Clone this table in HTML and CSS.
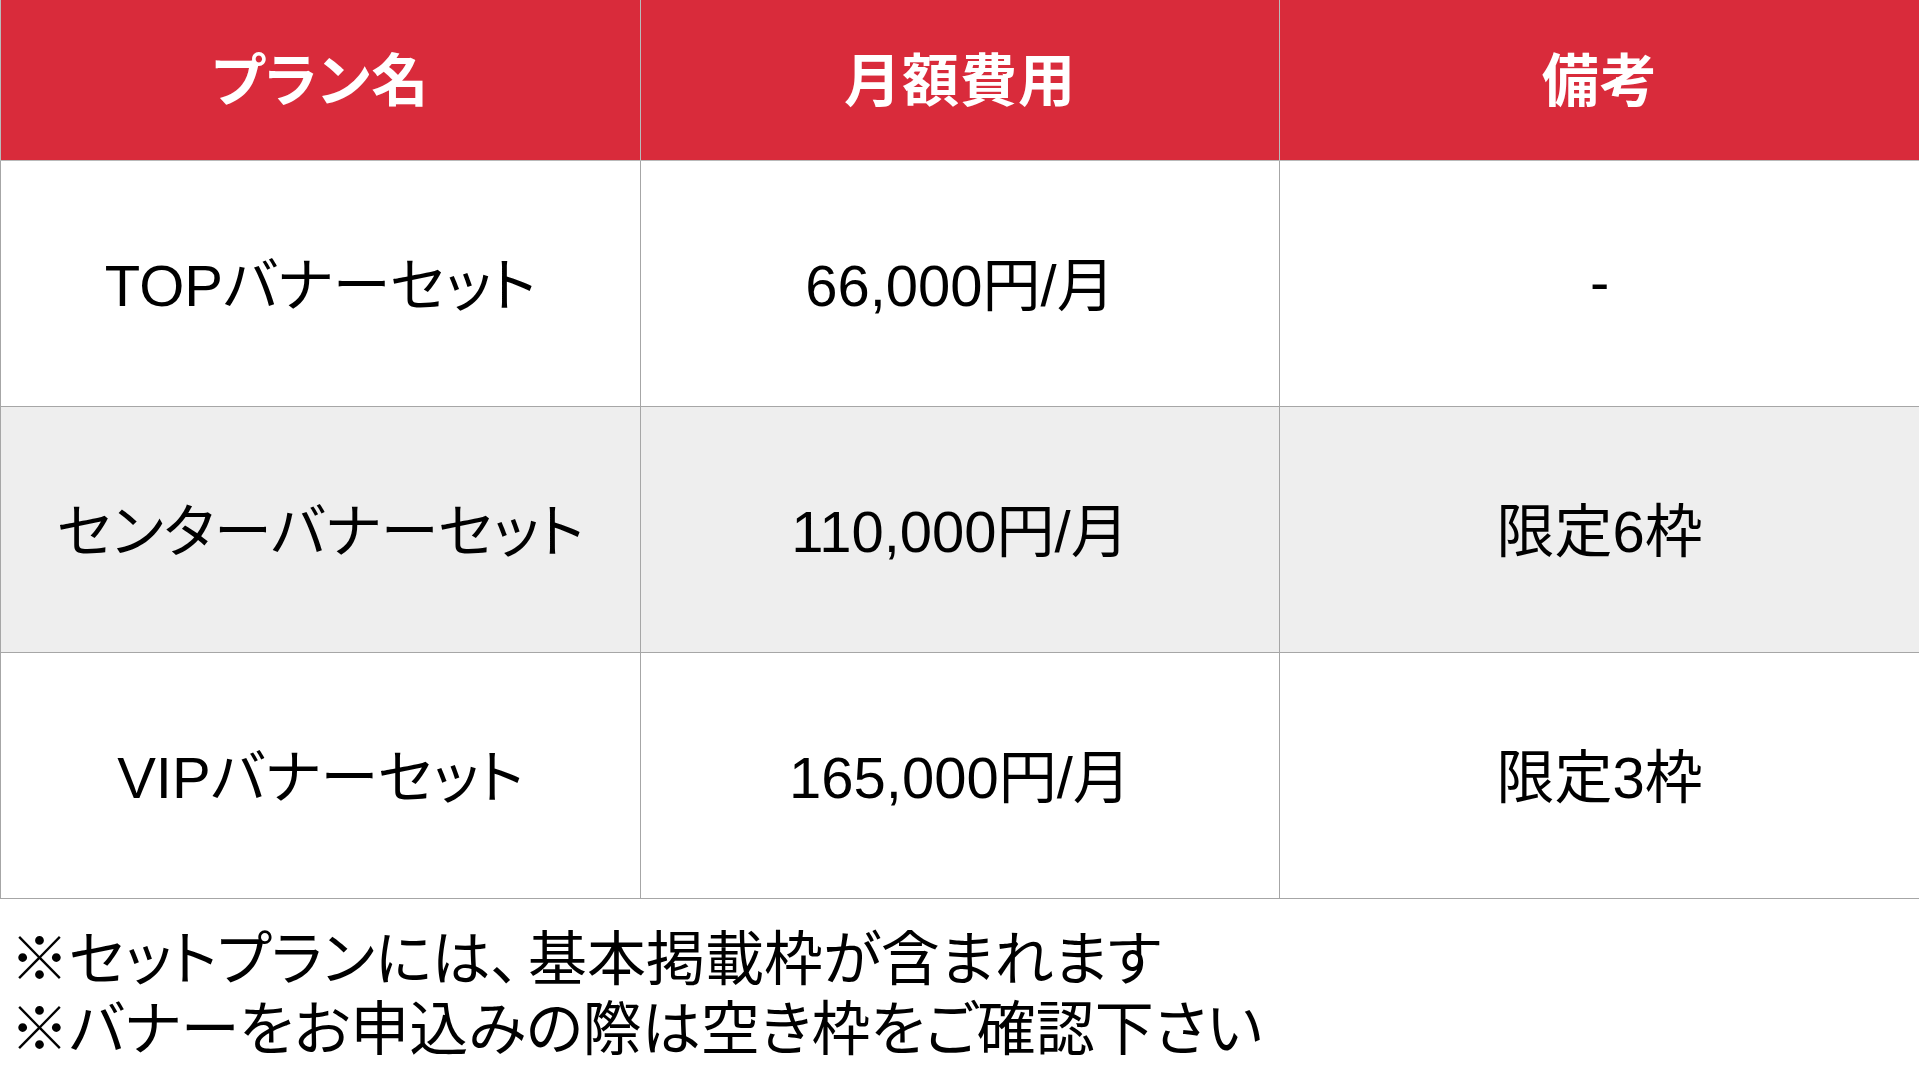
FILE: index.html
```html
<!DOCTYPE html>
<html lang="ja">
<head>
<meta charset="utf-8">
<title>プラン</title>
<link rel="stylesheet" href="styles.css">
</head>
<body>
<table class="plans">
  <thead>
    <tr>
      <th>プラン名</th>
      <th>月額費用</th>
      <th>備考</th>
    </tr>
  </thead>
  <tbody>
    <tr>
      <td>TOPバナーセット</td>
      <td>66,000円/月</td>
      <td>-</td>
    </tr>
    <tr class="alt">
      <td>センターバナーセット</td>
      <td>110,000円/月</td>
      <td>限定6枠</td>
    </tr>
    <tr>
      <td>VIPバナーセット</td>
      <td>165,000円/月</td>
      <td>限定3枠</td>
    </tr>
  </tbody>
</table>
<div class="notes">
  <p>※セットプランには<span class="comma">、</span>基本掲載枠が含まれます</p>
  <p>※バナーをお申込みの際は空き枠をご確認下さい</p>
</div>
</body>
</html>
```
FILE: styles.css
```css
html, body {
  margin: 0;
  padding: 0;
  background: #ffffff;
}
body {
  font-family: "Liberation Sans", "Noto Sans CJK JP", sans-serif;
  color: #000000;
  width: 1919px;
  height: 1080px;
  overflow: hidden;
}
.plans {
  width: 1920px;
  border-collapse: collapse;
  table-layout: fixed;
}
.plans th {
  background: #d92b3b;
  color: #ffffff;
  font-weight: 700;
  font-size: 57px;
  height: 160px;
  padding: 0 0 8px 0;
  box-sizing: border-box;
  border: 1px solid #b9b9b9;
  border-top: none;
  font-feature-settings: "palt";
  letter-spacing: 1px;
}
.plans td {
  height: 241px;
  padding: 0 0 4px 0;
  text-align: center;
  font-size: 58px;
  border: 1px solid #a6a6a6;
  font-feature-settings: "palt";
}
.plans tr.alt td {
  background: #eeeeee;
}
.notes {
  padding: 26px 0 0 10px;
}
.notes p {
  margin: 0;
  font-size: 59px;
  line-height: 70px;
  font-feature-settings: "palt";
  white-space: nowrap;
}
.notes .comma {
  padding-right: 8px;
}
```
